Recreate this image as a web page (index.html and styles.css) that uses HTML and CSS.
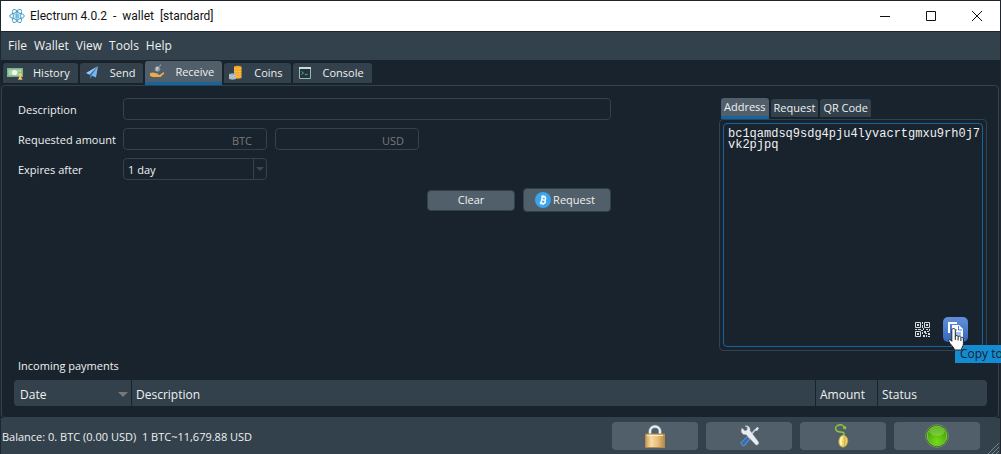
FILE: index.html
```html
<!DOCTYPE html>
<html lang="en">
<head>
<meta charset="utf-8">
<title>Electrum 4.0.2 - wallet [standard]</title>
<link rel="stylesheet" href="styles.css">
</head>
<body>
<div class="window">
  <header class="titlebar">
    <svg class="app-icon" viewBox="0 0 16 16" fill="none" stroke="#3d9bc6"><g stroke-width="1"><ellipse cx="8" cy="8" rx="7.3" ry="3"/><ellipse cx="8" cy="8" rx="7.3" ry="3" transform="rotate(60 8 8)"/><ellipse cx="8" cy="8" rx="7.3" ry="3" transform="rotate(120 8 8)"/></g><circle cx="8" cy="8" r="3.6" fill="#e4f3fa" stroke-width=".6"/><path d="M7 6v4M7 6h1.4a.9.9 0 0 1 0 2H7m1.5 0a1 1 0 0 1 0 2H7" stroke-width=".9"/></svg>
    <h1 class="title">Electrum 4.0.2 &nbsp;- &nbsp;wallet &nbsp;[standard]</h1>
    <div class="window-controls">
      <button class="window-button" aria-label="Minimize"><svg viewBox="0 0 12 12"><path d="M1 6.5h10"/></svg></button>
      <button class="window-button" aria-label="Maximize"><svg viewBox="0 0 12 12"><path d="M1.500 1.500h9v9h-9z"/></svg></button>
      <button class="window-button" aria-label="Close"><svg viewBox="0 0 12 12"><path d="M1 1l10 10M11 1L1 11"/></svg></button>
    </div>
  </header>
  <nav class="menubar">
    <button class="menu">File</button><button class="menu">Wallet</button><button class="menu">View</button><button class="menu">Tools</button><button class="menu">Help</button>
  </nav>
  <div class="tabs" role="tablist">
    <button class="tab" role="tab"><svg class="tab-icon" viewBox="0 0 16 16"><path d="M0 3h16v9H0z" fill="#79b68a"/><path d="M1.500 4.500h13v6h-13z" fill="#a9d5b0"/><circle cx="7.500" cy="7.500" r="2.600" fill="#f3f8ee"/><path d="M11 8h4.500M11 14.500h4.500" stroke="#c39842"/><path d="M11.500 8.500h3.500c0 2-1.200 2-1.200 3s1.200 1 1.200 2.500h-3.500c0-1.500 1.200-1.500 1.200-2.500s-1.200-1-1.200-3z" fill="#f1d080"/></svg>History</button>
    <button class="tab" role="tab"><svg class="tab-icon" viewBox="0 0 16 16"><path d="M14 1L2 8l3.500 1.800z" fill="#9acbf8"/><path d="M14 1L6 10v4l2-2.700z" fill="#367fc5"/><path d="M14 1L7.500 10.500l4.500 2z" fill="#7ab7f2"/></svg>Send</button>
    <button class="tab tab-active" role="tab" aria-selected="true"><svg class="tab-icon" viewBox="0 0 16 16"><path d="M1 9l3-.5c2 0 2 1 4.500 1 1.500 0 1.500 1.500 0 1.500h2l3.500-2.500c1-.5 1.700.5 1 1.300L11.500 13H4l-3-1z" fill="#efaa4e"/><circle cx="8.500" cy="5" r="2.800" fill="#82949c"/><path d="M7.800 6.800V3.500h1.500M7.800 5h1.500M10.500 2l1.300-1" fill="none" stroke="#d8e0e3"/></svg>Receive</button>
    <button class="tab" role="tab"><svg class="tab-icon" viewBox="0 0 16 16"><path d="M6 1.500q4-1.500 7.500 0V13q-3.500 1.500-7.500 0z" fill="#f3a72e"/><path d="M6 3.500q3.500 1.200 7.500 0M6 6q3.500 1.200 7.500 0M6 8.500q3.500 1.200 7.500 0M6 11q3.500 1.200 7.500 0" fill="none" stroke="#ffca58" stroke-width=".7"/><path d="M1 9q3.500-1.500 7 0v5q-3.500 1.500-7 0z" fill="#9aabb2"/><path d="M1 10.500q3.500 1.200 7 0M1 12.500q3.500 1.200 7 0" fill="none" stroke="#dbe4e8" stroke-width=".7"/></svg>Coins</button>
    <button class="tab" role="tab"><svg class="tab-icon" viewBox="0 0 16 16"><path d="M2.500 2.500h11v11h-11z" fill="#24363d" stroke="#a4b1b5"/><path d="M2 3h12" stroke="#d0d8da" stroke-width="2"/><path d="M4.500 6.500l2 1.500-2 1.500M8 9.500h2.500" fill="none" stroke="#35b593"/></svg>Console</button>
  </div>
  <main class="pane">
    <div class="receive">
      <form class="request-form">
        <label class="label" for="description">Description</label>
        <input class="field field-wide" id="description" type="text">
        <label class="label" for="btc">Requested amount</label>
        <input class="field field-amount" id="btc" type="text" placeholder="BTC">
        <input class="field field-amount" type="text" placeholder="USD" aria-label="Amount in USD">
        <label class="label label-start" for="expires">Expires after</label>
        <div class="select-box">
          <select class="field" id="expires"><option>1 day</option></select>
          <span class="select-arrow"></span>
        </div>
        <button class="button button-clear" type="button">Clear</button>
        <button class="button button-request" type="button"><svg class="coin-icon" viewBox="0 0 16 16"><circle cx="8" cy="8" r="8" fill="#3aa5ec"/><g fill="none" stroke="#fff" stroke-width="1.500" transform="rotate(13 8 8)"><path d="M5.500 4.700h3.200a1.600 1.600 0 0 1 0 3.200H6.700m2.300 0a1.700 1.700 0 0 1 0 3.400H5.500M6.700 4.700v6.600"/><path d="M7 3v1.500M9 3v1.500M7 11.500V13M9 11.500V13" stroke-width="1"/></g></svg>Request</button>
      </form>
      <section class="details">
        <div class="subtabs" role="tablist">
          <button class="subtab subtab-active" role="tab" aria-selected="true">Address</button>
          <button class="subtab" role="tab">Request</button>
          <button class="subtab" role="tab">QR Code</button>
        </div>
        <div class="details-pane">
          <textarea class="address" aria-label="Address" readonly>bc1qamdsq9sdg4pju4lyvacrtgmxu9rh0j7vk2pjpq</textarea>
          <div class="address-actions">
            <button class="icon-button" aria-label="Show QR code"><svg class="qr-icon" viewBox="0 0 15 15"><path d="M.5.5h5v5h-5zM9.500.5h5v5h-5zM.5 9.500h5v5h-5z" fill="none" stroke="#d5dadd"/><path d="M2 2h2v2H2zM11 2h2v2h-2zM2 11h2v2H2zM7 0h1v2H7zM7 3h1v3H7zM0 7h2v1H0zM3 7h3v1H3zM6 8h2v1H6zM8 6h1v2H8zM11 7h2v1h-2zM14 7h1v2h-1zM7 10h1v2H7zM9 9h2v2H9zM12 9h2v1h-2zM10 11h2v1h-2zM13 11h2v2h-2zM8 13h2v2H8zM11 13h1v2h-1zM13 14h2v1h-2z" fill="#d5dadd"/></svg></button>
            <button class="icon-button copy-button" aria-label="Copy to clipboard"><svg class="copy-icon" viewBox="0 0 25 25"><path d="M5 5h9v2H7v9H5z" fill="#fff"/><path d="M9 8h7l4 4v8H9z" fill="#fff"/><path d="M15.500 9v4H19M11 13h3M11 16h7M11 18h7" fill="none" stroke="#4a80d2"/></svg>
              <svg class="cursor" viewBox="0 0 17 24"><path d="M5.500 1.500c1.300 0 1.800.8 1.800 1.800v6c.4-1.200 2.700-1 2.800.5.500-1 2.600-.8 2.800.8.700-.7 2.500-.4 2.500 1.400v4.500c0 3-2 4-2 6.500H6.500c0-2.500-5-6-5.800-9-.4-1.600 1.500-2.100 3.100.3v-11c0-1 .5-1.800 1.700-1.800z" fill="#fff" stroke="#20242b"/><path d="M7.300 9v4M10.100 10v3.500M12.900 11v3" stroke="#20242b" fill="none"/></svg>
              <span class="tooltip">Copy to</span></button>
          </div>
        </div>
      </section>
    </div>
    <h2 class="payments-title">Incoming payments</h2>
    <table class="payments">
      <thead><tr><th class="col-date">Date<span class="sort-arrow"></span></th><th>Description</th><th class="col-amount">Amount</th><th class="col-status">Status</th></tr></thead>
    </table>
  </main>
  <footer class="statusbar">
    <span class="balance">Balance: 0. BTC (0.00 USD) &nbsp;1 BTC~11,679.88 USD</span>
    <div class="status-actions">
      <button class="status-button" aria-label="Password"><svg viewBox="0 0 24 24"><defs><linearGradient id="brass"><stop stop-color="#c99b53"/><stop offset=".3" stop-color="#f5dca6"/><stop offset=".65" stop-color="#e3be7d"/><stop offset="1" stop-color="#b88945"/></linearGradient></defs><path d="M7 13V7.500a5 5 0 0 1 10 0V13" fill="none" stroke="#8b989f" stroke-width="3.500"/><path d="M7 13V7.500a5 5 0 0 1 10 0V13" fill="none" stroke="#edf1f3" stroke-width="2"/><path d="M2.500 10h19v13.500h-19z" fill="url(#brass)" stroke="#b58a4d"/><path d="M4 11.500h16" stroke="#ffeec5"/></svg></button>
      <button class="status-button" aria-label="Preferences"><svg viewBox="0 0 24 24"><path d="M19 5l-8 9" stroke="#c3cace" stroke-width="1.800"/><path d="M20 3l2 1-2 3-2-1z" fill="#e4e8ea"/><path d="M10.500 12.500l2.500 2.500-5 6c-2 2-5-.5-3.500-3z" fill="#356fb7" stroke="#80aee2" stroke-width=".7"/><path d="M5 4l3 3 2-1 .5-2.500L8 2c3-.7 5.500 1.500 5 4.500l8.500 11.500c1 2-1.500 4-3 2.500L9 10.500c-3 .7-5.500-2-4.500-5z" fill="#e9edef" stroke="#a5aeb3" stroke-width=".5"/></svg></button>
      <button class="status-button" aria-label="Seed"><svg viewBox="0 0 24 24"><path d="M12 11.500c2.500-2 .5-3.500-2.500-3.500C4.500 8 3 3.500 6.500 1.500 10 0 13 1 14 4.500l-2-1M14 4.500l1-2" fill="none" stroke="#93c936" stroke-width="1.400"/><path d="M12 11c4.500 1 6 5 4 9-1.500 4-6 4-7.500 1-2-4 0-9 3.500-10z" fill="#edd36b" stroke="#b79e36" stroke-width=".6"/><path d="M11 13c-1.500 3-1.500 6 0 8" fill="none" stroke="#fff6bd" stroke-width="2"/><path d="M13.500 13c1 3 .5 6-.5 9" fill="none" stroke="#b99a3c" stroke-width=".8"/></svg></button>
      <button class="status-button" aria-label="Network"><svg viewBox="0 0 24 24"><defs><radialGradient id="lamp" cx=".5" cy=".8" r=".75"><stop stop-color="#77dd18"/><stop offset="1" stop-color="#3f9c08"/></radialGradient></defs><circle cx="12" cy="12" r="11.400" fill="#336d23" stroke="#82966f" stroke-width=".8"/><circle cx="12" cy="12" r="9.800" fill="url(#lamp)" stroke="#8bd450" stroke-width=".8"/><ellipse cx="12" cy="7.500" rx="7.500" ry="4.500" fill="#a4e36a" opacity=".4"/></svg></button>
    </div>
    <svg class="grip" viewBox="0 0 12 12"><path d="M1 12L12 1M5 12l7-7M9 12l3-3" stroke="#79858d"/></svg>
  </footer>
</div>
</body>
</html>
```
FILE: styles.css
```css
* { box-sizing: border-box; }
body { margin: 0; background: #19232d; overflow: hidden; }
button, input, select, textarea { margin: 0; font: inherit; color: inherit; }
button { padding: 0; border: 0; background: none; }
svg { display: block; flex: none; }

.window {
  display: flex;
  flex-direction: column;
  min-height: 100vh;
  border: solid #20262d;
  border-width: 1px 1px 0;
  color: #f0f0f0;
  font: 11px/16px "Open Sans", "Noto Sans", sans-serif;
}

.titlebar {
  display: flex;
  align-items: center;
  height: 31px;
  padding-left: 8px;
  border-bottom: 1px solid #20262d;
  background: #fff;
  color: #111;
}
.app-icon { width: 16px; height: 16px; }
.title { flex: 1; margin: 0 0 0 5px; font: 12px/16px Roboto, "Open Sans", sans-serif; }
.window-controls { display: flex; }
.window-button { display: grid; place-items: center; width: 46px; height: 30px; }
.window-button svg { width: 12px; height: 12px; fill: none; stroke: #111; }

.menubar {
  display: flex;
  align-items: center;
  gap: 7px;
  height: 28px;
  padding: 0 7px;
  background: #32414b;
  font-size: 12px;
}

.tabs { display: flex; align-items: flex-end; gap: 2px; height: 25px; padding: 0 2px; }
.tab {
  display: flex;
  align-items: center;
  gap: 10px;
  height: 20px;
  margin-bottom: 2px;
  padding: 0 8px 0 4px;
  border-radius: 3px 3px 0 0;
  background: #32414b;
}
.tab-icon { width: 16px; height: 16px; }
.tab-active {
  height: 24px;
  margin-bottom: 0;
  border-bottom: 3px solid #1464a0;
  background: #505f69;
}

.pane {
  flex: 1;
  margin-right: 1px;
  padding: 12px 11px 11px 12px;
  border: 1px solid #32414b;
  border-radius: 4px;
}
.receive { display: flex; justify-content: space-between; gap: 108px; padding-left: 4px; }

.request-form {
  flex: 1;
  display: grid;
  grid-template-columns: 97px 144fr 144fr 88fr 88fr;
  gap: 8px;
  align-content: start;
  align-items: center;
}
.label { padding-top: 2px; white-space: nowrap; }
.field {
  width: 100%;
  min-width: 0;
  height: 22px;
  padding: 2px 4px 0;
  border: 1px solid #32414b;
  border-radius: 4px;
  outline: 0;
  background: #19232d;
}
.field-wide { grid-column: 2 / -1; }
.field-amount { padding-right: 14px; text-align: right; }
.field-amount::placeholder { color: #787878; opacity: 1; }
.label-start { grid-column: 1; }
.select-box { position: relative; }
.select-box .field { display: block; appearance: none; }
.select-arrow {
  position: absolute;
  inset: 1px 1px 1px auto;
  display: grid;
  place-items: center;
  width: 13px;
  border-left: 1px solid #32414b;
  pointer-events: none;
}
.select-arrow::before, .sort-arrow {
  content: "";
  border: solid transparent;
  border-width: 4px 4px 0;
  border-top-color: #3b4952;
}
.button {
  display: flex;
  align-items: center;
  justify-content: center;
  gap: 2px;
  height: 21px;
  border: 1px solid #32414b;
  border-radius: 4px;
  background: #505f69;
}
.button-clear { grid-column: 4; grid-row: 4; }
.button-request { grid-column: 5; grid-row: 4; height: 24px; padding-right: 4px; }
.coin-icon { width: 16px; height: 16px; }

.details { flex: 0 1 268px; }
.subtabs { display: flex; align-items: flex-end; gap: 2px; height: 21px; padding-left: 2px; }
.subtab {
  height: 18px;
  margin-bottom: 2px;
  padding: 0 3px;
  border-radius: 3px 3px 0 0;
  background: #32414b;
  white-space: nowrap;
}
.subtab-active {
  height: 21px;
  margin-bottom: 0;
  border-bottom: 3px solid #1464a0;
  background: #505f69;
}
.details-pane { position: relative; padding: 3px; border: 1px solid #32414b; border-radius: 4px; }
.address {
  display: block;
  width: 100%;
  height: 224px;
  padding: 5px 1px 4px 4px;
  border: 1px solid #1464a0;
  border-radius: 4px;
  outline: 0;
  overflow: hidden;
  resize: none;
  background: #19232d;
  font: 12px/11px "Liberation Mono", "DejaVu Sans Mono", monospace;
  word-break: break-all;
}
.address-actions {
  position: absolute;
  right: 18px;
  bottom: 8px;
  display: flex;
  align-items: center;
  gap: 13px;
}
.icon-button { position: relative; }
.qr-icon { width: 15px; height: 15px; }
.copy-button { border-radius: 5px; background: linear-gradient(#628fda, #3467bd); }
.copy-icon { width: 25px; height: 25px; }
.cursor { position: absolute; z-index: 2; left: 5px; top: 10px; width: 17px; height: 24px; }
.tooltip {
  position: absolute;
  z-index: 1;
  left: 12px;
  top: 28px;
  height: 18px;
  padding-left: 5px;
  background: #148cd2;
  color: #19232d;
  font-size: 12px;
  line-height: 18px;
  text-align: left;
  white-space: nowrap;
}

.payments-title { margin: 7px 4px 6px; font-size: 11px; font-weight: 400; }
.payments {
  width: 100%;
  border-spacing: 0;
  table-layout: fixed;
  border-radius: 4px;
  overflow: hidden;
  background: #32414b;
  font-size: 12px;
}
.payments th { height: 26px; padding: 3px 5px 0 4px; font-weight: 400; text-align: left; }
.payments th + th { border-left: 1px solid #19232d; }
.payments .col-date { width: 117px; padding: 3px 3px 0 6px; }
.sort-arrow { float: right; margin-top: 5px; border-width: 5px 5px 0; border-top-color: #787878; }
.col-amount { width: 62px; }
.col-status { width: 110px; }

.statusbar {
  position: relative;
  display: flex;
  align-items: center;
  justify-content: space-between;
  height: 36px;
  padding: 0 20px 0 1px;
  background: #32414b;
}
.balance { padding-top: 2px; white-space: nowrap; }
.status-actions { display: flex; gap: 8px; }
.status-button {
  display: grid;
  place-items: center;
  width: 86px;
  height: 28px;
  border-radius: 4px;
  background: #505f69;
}
.status-button svg { width: 24px; height: 24px; }
.grip { position: absolute; right: 1px; bottom: 0; width: 12px; height: 12px; }
```
